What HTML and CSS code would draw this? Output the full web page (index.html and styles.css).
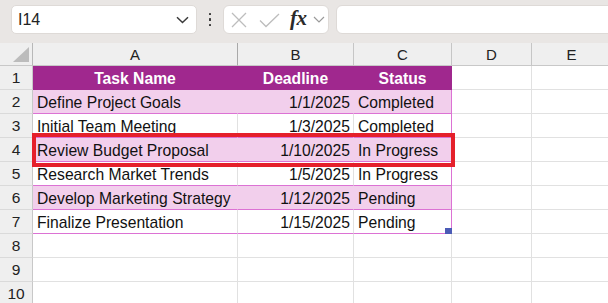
FILE: index.html
```html
<!DOCTYPE html>
<html>
<head>
<meta charset="utf-8">
<link rel="stylesheet" href="styles.css">
</head>
<body>
<div class="toolbar">
  <div class="namebox">
    <span class="ref">I14</span>
    <svg class="chev" width="13" height="8" viewBox="0 0 13 8"><path d="M1 1.2 L6.5 6.5 L12 1.2" fill="none" stroke="#3a3a3a" stroke-width="1.5"/></svg>
  </div>
  <div class="dots"><i></i><i></i><i></i></div>
  <div class="fnbox">
    <svg class="ico-x" width="16" height="16" viewBox="0 0 16 16"><path d="M1 1 L15 15 M15 1 L1 15" stroke="#bdbdbd" stroke-width="1.3" fill="none"/></svg>
    <svg class="ico-ok" width="21" height="15" viewBox="0 0 21 15"><path d="M1 7.5 L7 13.5 L20 1" stroke="#bdbdbd" stroke-width="1.3" fill="none"/></svg>
    <span class="fx">fx</span>
    <svg class="chev2" width="12" height="7" viewBox="0 0 12 7"><path d="M1 1 L6 6 L11 1" fill="none" stroke="#9a9a9a" stroke-width="1.2"/></svg>
  </div>
  <div class="formula"></div>
</div>

<div class="sheet">
  <div class="corner"><span class="tri"></span></div>
  <div class="colh">A</div>
  <div class="colh">B</div>
  <div class="colh">C</div>
  <div class="colh">D</div>
  <div class="colh">E</div>

  <div class="rh">1</div>
  <div class="t hd">Task Name</div>
  <div class="t hd">Deadline</div>
  <div class="t hd last">Status</div>
  <div class="c"></div><div class="c"></div>

  <div class="rh">2</div>
  <div class="t alt">Define Project Goals</div>
  <div class="t alt num">1/1/2025</div>
  <div class="t alt last">Completed</div>
  <div class="c"></div><div class="c"></div>

  <div class="rh">3</div>
  <div class="t">Initial Team Meeting</div>
  <div class="t num">1/3/2025</div>
  <div class="t last">Completed</div>
  <div class="c"></div><div class="c"></div>

  <div class="rh">4</div>
  <div class="t alt">Review Budget Proposal</div>
  <div class="t alt num">1/10/2025</div>
  <div class="t alt last">In Progress</div>
  <div class="c"></div><div class="c"></div>

  <div class="rh">5</div>
  <div class="t">Research Market Trends</div>
  <div class="t num">1/5/2025</div>
  <div class="t last">In Progress</div>
  <div class="c"></div><div class="c"></div>

  <div class="rh">6</div>
  <div class="t alt">Develop Marketing Strategy</div>
  <div class="t alt num">1/12/2025</div>
  <div class="t alt last">Pending</div>
  <div class="c"></div><div class="c"></div>

  <div class="rh">7</div>
  <div class="t">Finalize Presentation</div>
  <div class="t num">1/15/2025</div>
  <div class="t last handle-cell">Pending<span class="handle"></span></div>
  <div class="c"></div><div class="c"></div>

  <div class="rh">8</div>
  <div class="c"></div><div class="c"></div><div class="c"></div><div class="c"></div><div class="c"></div>
  <div class="rh">9</div>
  <div class="c"></div><div class="c"></div><div class="c"></div><div class="c"></div><div class="c"></div>
  <div class="rh">10</div>
  <div class="c"></div><div class="c"></div><div class="c"></div><div class="c"></div><div class="c"></div>

  <div class="highlight"></div>
</div>
</body>
</html>
```

FILE: styles.css
```css
html, body {
  margin: 0;
  padding: 0;
  background: #ffffff;
  overflow: hidden;
}
body {
  width: 608px;
  height: 303px;
  font-family: "Liberation Sans", Arial, sans-serif;
  color: #111;
}

.toolbar {
  height: 43px;
  box-sizing: border-box;
  background: #e9e6e4;
  display: flex;
  align-items: flex-start;
  padding: 5px 0 0 11px;
}
.namebox {
  width: 186px;
  height: 29px;
  box-sizing: border-box;
  background: #fff;
  border: 1px solid #dedad7;
  border-radius: 5px;
  display: flex;
  align-items: center;
  padding: 0 6px 0 6px;
}
.ref {
  font-size: 16px;
  color: #222;
  flex: 1;
  padding-top: 1px;
}
.chev { margin-right: 1px; }

.dots {
  width: 26px;
  height: 29px;
  display: flex;
  flex-direction: column;
  align-items: center;
  justify-content: center;
  gap: 3px;
}
.dots i {
  display: block;
  width: 2.5px;
  height: 2.5px;
  background: #3c3c3c;
  border-radius: 0.5px;
}

.fnbox {
  width: 106px;
  height: 29px;
  box-sizing: border-box;
  background: #fff;
  border: 1px solid #dedad7;
  border-radius: 6px;
  display: flex;
  align-items: center;
  padding-left: 7px;
}
.ico-x { margin-top: 1px; }
.ico-ok { margin-left: 12px; margin-top: 1px; }
.fx {
  margin-left: 10px;
  font-family: "Liberation Serif", "Times New Roman", serif;
  font-style: italic;
  font-weight: bold;
  font-size: 21px;
  color: #2a2a2a;
  letter-spacing: -0.5px;
  line-height: 1;
  margin-top: -3px;
}
.chev2 { margin-left: 6px; }

.formula {
  flex: 1;
  height: 29px;
  box-sizing: border-box;
  margin-left: 7px;
  margin-right: -12px;
  background: #fff;
  border: 1px solid #dedad7;
  border-radius: 6px;
}

.sheet {
  position: relative;
  display: grid;
  grid-template-columns: 33px 205px 116px 98px 80px 80px;
  grid-template-rows: 23px repeat(10, 24px);
}
.sheet > div {
  box-sizing: border-box;
}
.corner {
  position: relative;
  background: #efefef;
  border-right: 1px solid #b8b8b8;
  border-bottom: 1px solid #c8c8c8;
}
.tri {
  position: absolute;
  right: 3px;
  bottom: 3px;
  width: 16px;
  height: 15px;
  background: #bcbcbc;
  clip-path: polygon(100% 0, 100% 100%, 0 100%);
}
.colh {
  background: #efefef;
  border-right: 1px solid #c6c6c6;
  border-bottom: 1px solid #c8c8c8;
  text-align: center;
  font-size: 15px;
  line-height: 23px;
  color: #222;
}
.colh:nth-child(2) { border-right-color: #a9a9a9; }

.rh {
  background: #efefef;
  border-right: 1px solid #c8c8c8;
  border-bottom: 1px solid #dadada;
  text-align: center;
  font-size: 15.5px;
  line-height: 24px;
  color: #222;
}
.c {
  border-right: 1px solid #e1e1e1;
  border-bottom: 1px solid #e1e1e1;
}
.t {
  font-size: 15.7px;
  line-height: 23px;
  padding: 1px 4px 0 4px;
  white-space: nowrap;
  overflow: hidden;
  border-right: 1px solid #e1e1e1;
  border-bottom: 1px solid #dc72d4;
  color: #111;
}
.t.num { text-align: right; padding-right: 3px; }
.t.last { border-right-color: #dc72d4; }
.t.alt {
  background: #f2cfec;
  border-right-color: #f2cfec;
}
.t.alt.last { border-right-color: #dc72d4; }
.t.hd {
  background: #a0288e;
  border-right-color: #a0288e;
  border-bottom-color: #a0288e;
  color: #ffffff;
  font-weight: bold;
  text-align: center;
}
.t.hd.last { border-right-color: #a0288e; }

.handle-cell { position: relative; overflow: visible; }
.handle {
  position: absolute;
  right: -1px;
  bottom: -1px;
  width: 7px;
  height: 6px;
  background: #4b5bb6;
}

.highlight {
  position: absolute;
  left: 32px;
  top: 90px;
  width: 423px;
  height: 34px;
  box-sizing: border-box;
  border: 4px solid #e5202b;
  pointer-events: none;
}
```
